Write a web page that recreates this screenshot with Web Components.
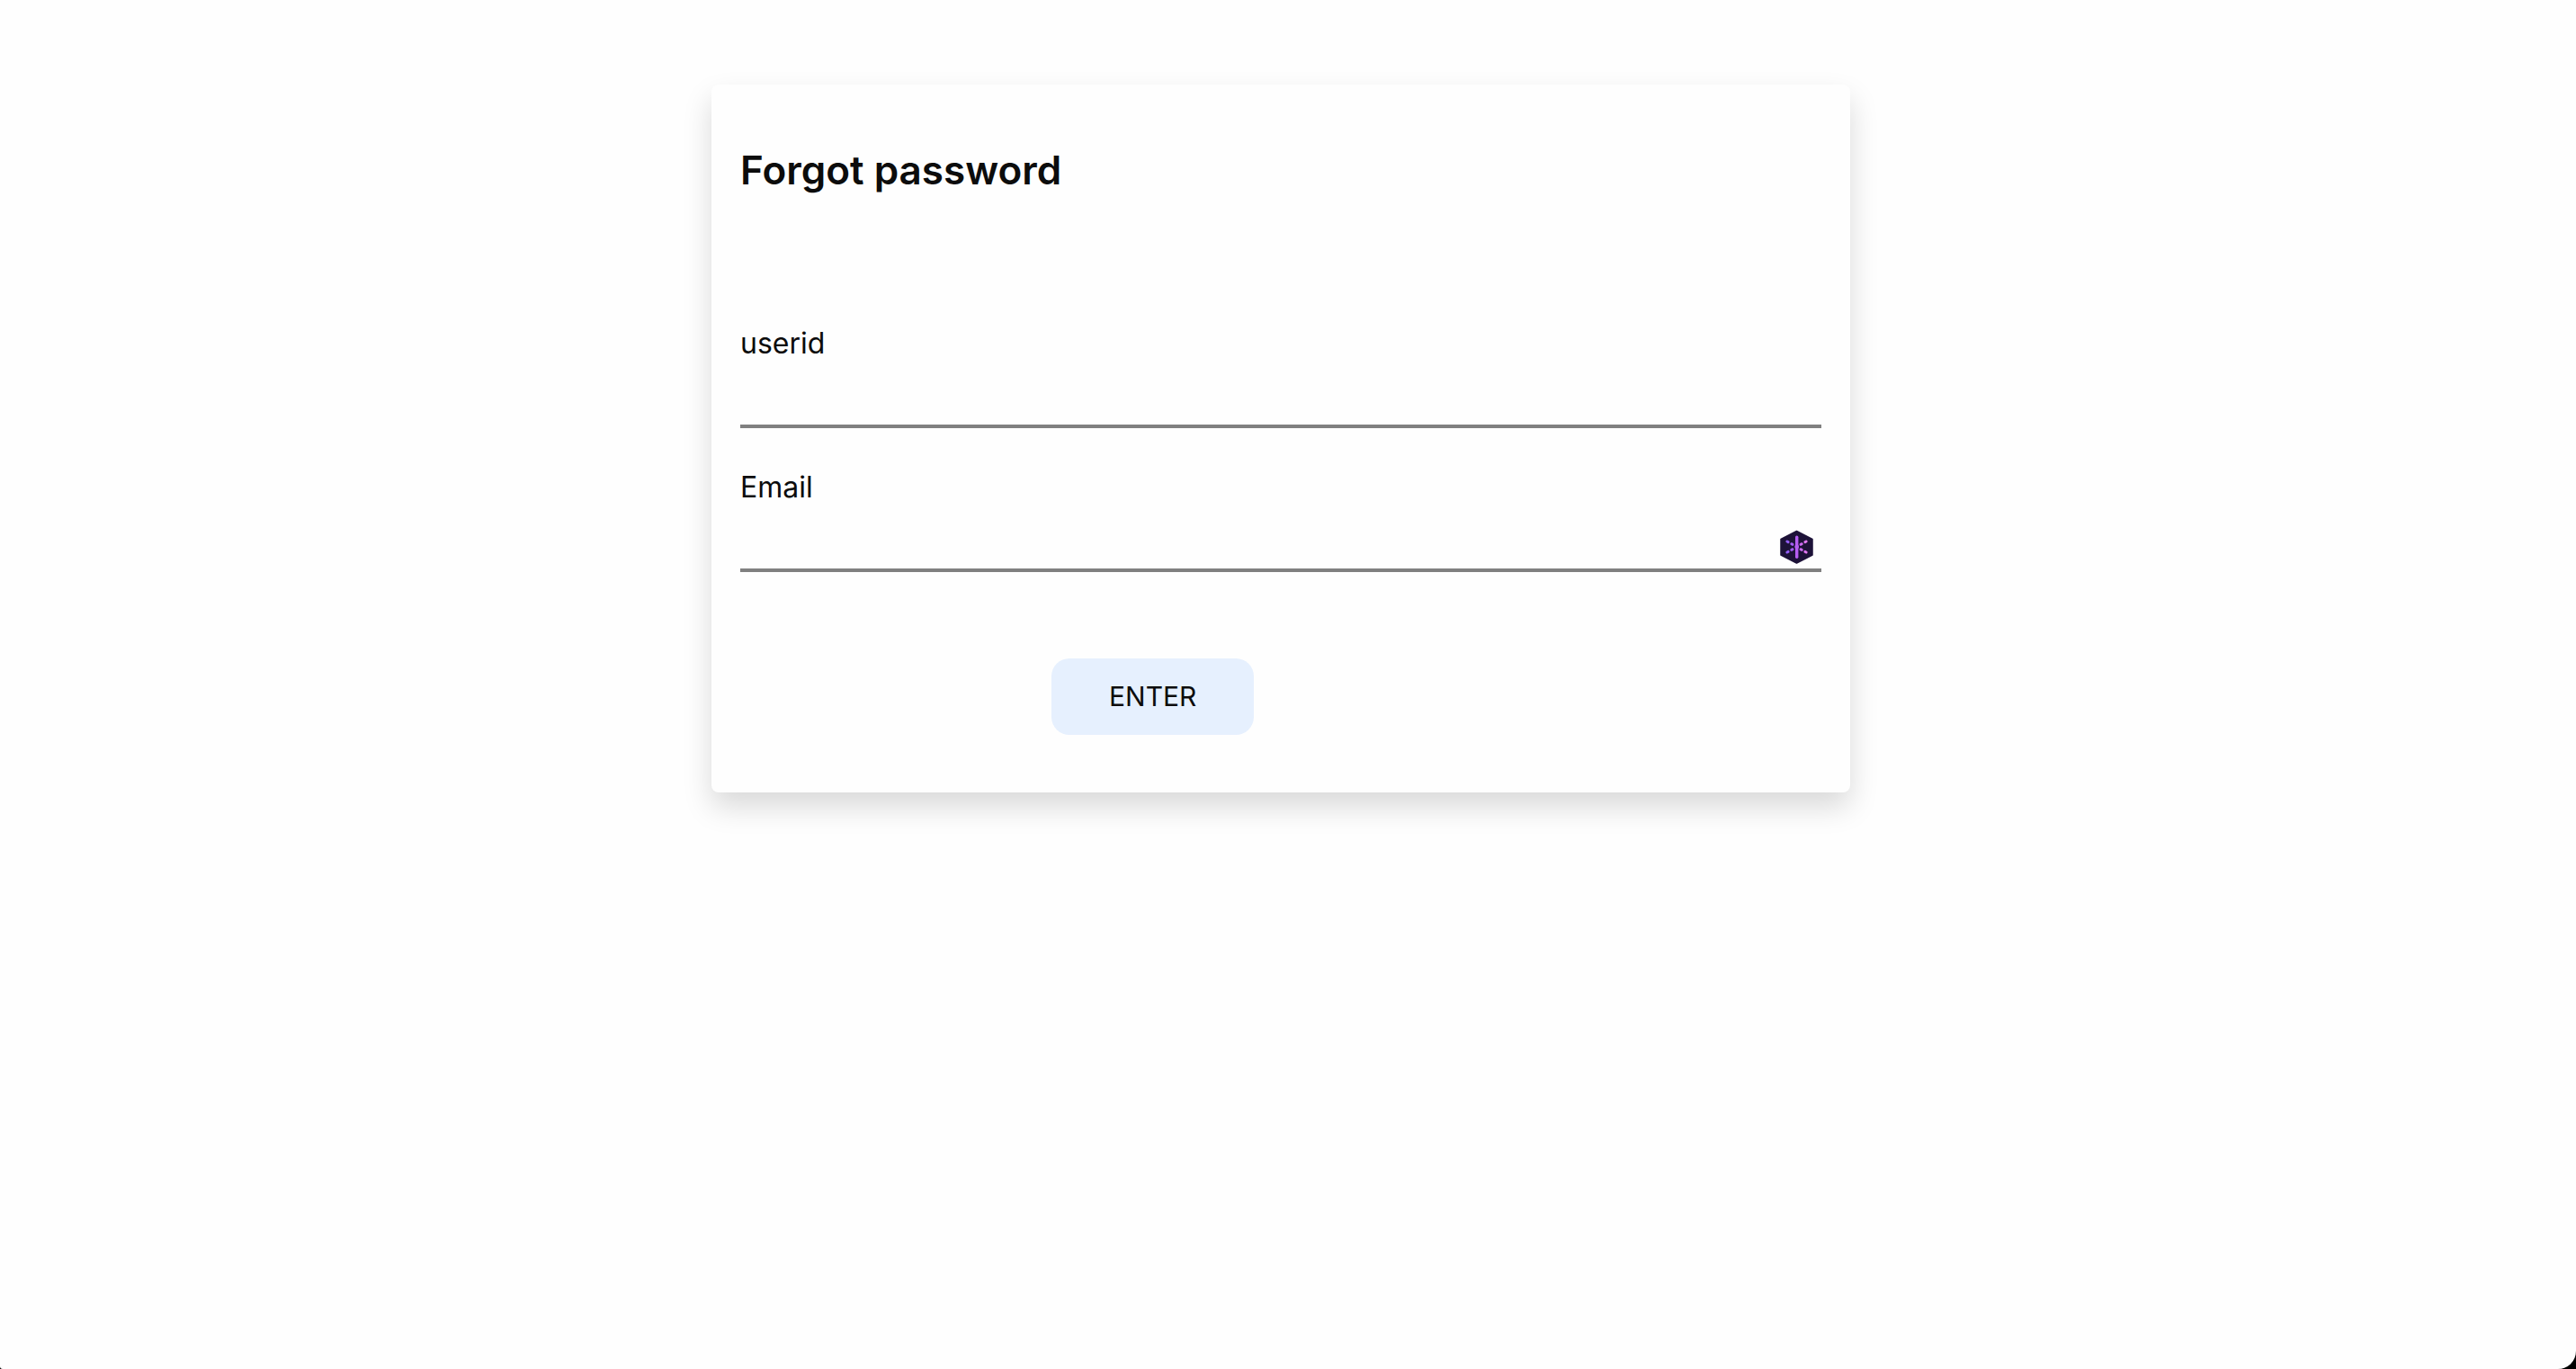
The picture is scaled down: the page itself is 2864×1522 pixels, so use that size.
<!DOCTYPE html>
<html lang="en">
<head>
<meta charset="utf-8">
<meta name="viewport" content="width=device-width, initial-scale=1">
<title>Forgot password</title>
<style>
html { background: #000; }
body { margin: 0; font-family: Inter, "Liberation Sans", sans-serif; font-size: 32px; line-height: 48px; color: #0c0c0c; }
</style>
</head>
<body>
<page-shell>
  <form-card heading="Forgot password">
    <text-field label="userid" name="userid"></text-field>
    <text-field label="Email" name="email" type="email"><vault-icon></vault-icon></text-field>
    <submit-button slot="action">ENTER</submit-button>
  </form-card>
</page-shell>
<script>
class BaseElement extends HTMLElement {
  render(html) {
    this.attachShadow({ mode: "open" }).innerHTML = html;
  }
}

customElements.define("page-shell", class extends BaseElement {
  connectedCallback() {
    this.render(`
      <style>
        :host { display: block; box-sizing: border-box; min-height: 100vh; padding: 94px 32px 32px 16px; background: #fefefe; border-radius: 0 0 20px 3px; }
      </style>
      <main><slot></slot></main>`);
  }
});

customElements.define("form-card", class extends BaseElement {
  connectedCallback() {
    this.render(`
      <style>
        :host { display: block; box-sizing: border-box; max-width: 1266px; margin: 0 auto; padding: 64px 32px; background: #fefefe; border-radius: 8px; box-shadow: 0 16px 32px rgba(0, 0, 0, .15); }
        h1 { margin: 0; font-size: 44px; line-height: 62px; font-weight: 600; }
        .fields { display: flex; flex-direction: column; gap: 42px; padding-top: 138px; }
        .action { display: flex; padding: 96px 0 0 346px; }
      </style>
      <h1></h1>
      <div class="fields"><slot></slot></div>
      <div class="action"><slot name="action"></slot></div>`);
    this.shadowRoot.querySelector("h1").textContent = this.getAttribute("heading");
  }
});

customElements.define("text-field", class extends BaseElement {
  connectedCallback() {
    this.render(`
      <style>
        :host { display: block; }
        label { display: block; }
        .box { display: flex; align-items: center; height: 70px; box-sizing: border-box; padding: 18px 8px 0 0; border-bottom: 4px solid #808080; }
        input { flex: 1; min-width: 0; height: 48px; padding: 0; border: 0; outline: 0; background: none; font: inherit; color: inherit; }
      </style>
      <label for="field"></label>
      <div class="box"><input id="field"><slot></slot></div>`);
    this.shadowRoot.querySelector("label").textContent = this.getAttribute("label");
    const input = this.shadowRoot.querySelector("input");
    input.name = this.getAttribute("name");
    input.type = this.getAttribute("type") || "text";
  }
});

customElements.define("submit-button", class extends BaseElement {
  connectedCallback() {
    this.render(`
      <style>
        :host { display: block; }
        button { display: block; margin: 0; padding: 18px 64px; border: 0; border-radius: 20px; background: #e6f0fe; color: inherit; font: inherit; font-size: 30px; line-height: 49px; cursor: pointer; }
      </style>
      <button type="submit"><slot></slot></button>`);
  }
});

customElements.define("vault-icon", class extends BaseElement {
  connectedCallback() {
    this.render(`
      <style>
        :host { display: block; }
        svg { display: block; width: 38px; height: 38px; }
      </style>
      <svg viewBox="0 0 38 38" aria-hidden="true">
        <defs>
          <linearGradient id="ink" gradientUnits="userSpaceOnUse" x1="6" y1="0" x2="32" y2="0">
            <stop offset="0" stop-color="#8b5cf6"/><stop offset=".5" stop-color="#b65df2"/><stop offset="1" stop-color="#f080f0"/>
          </linearGradient>
        </defs>
        <path d="M18.5 1.5 36 10.5V28L18.5 37 1 28V10.5Z" fill="#1d1238" stroke="#1d1238" stroke-width="1.5" stroke-linejoin="round"/>
        <path d="M7.9 13 9.1 13.6M12.8 15.7 14 16.3M7.9 25 9.1 24.4M12.8 22.3 14 21.7M29.1 13 27.9 13.6M24.2 15.7 23 16.3M29.1 25 27.9 24.4M24.2 22.3 23 21.7" fill="none" stroke="url(#ink)" stroke-width="3" stroke-linecap="round"/>
        <rect x="17" y="6.5" width="3.4" height="25.5" rx="1.7" fill="#b65df2"/>
        <circle cx="18.7" cy="19" r="2.4" fill="#b65df2"/>
      </svg>`);
  }
});
</script>
</body>
</html>
